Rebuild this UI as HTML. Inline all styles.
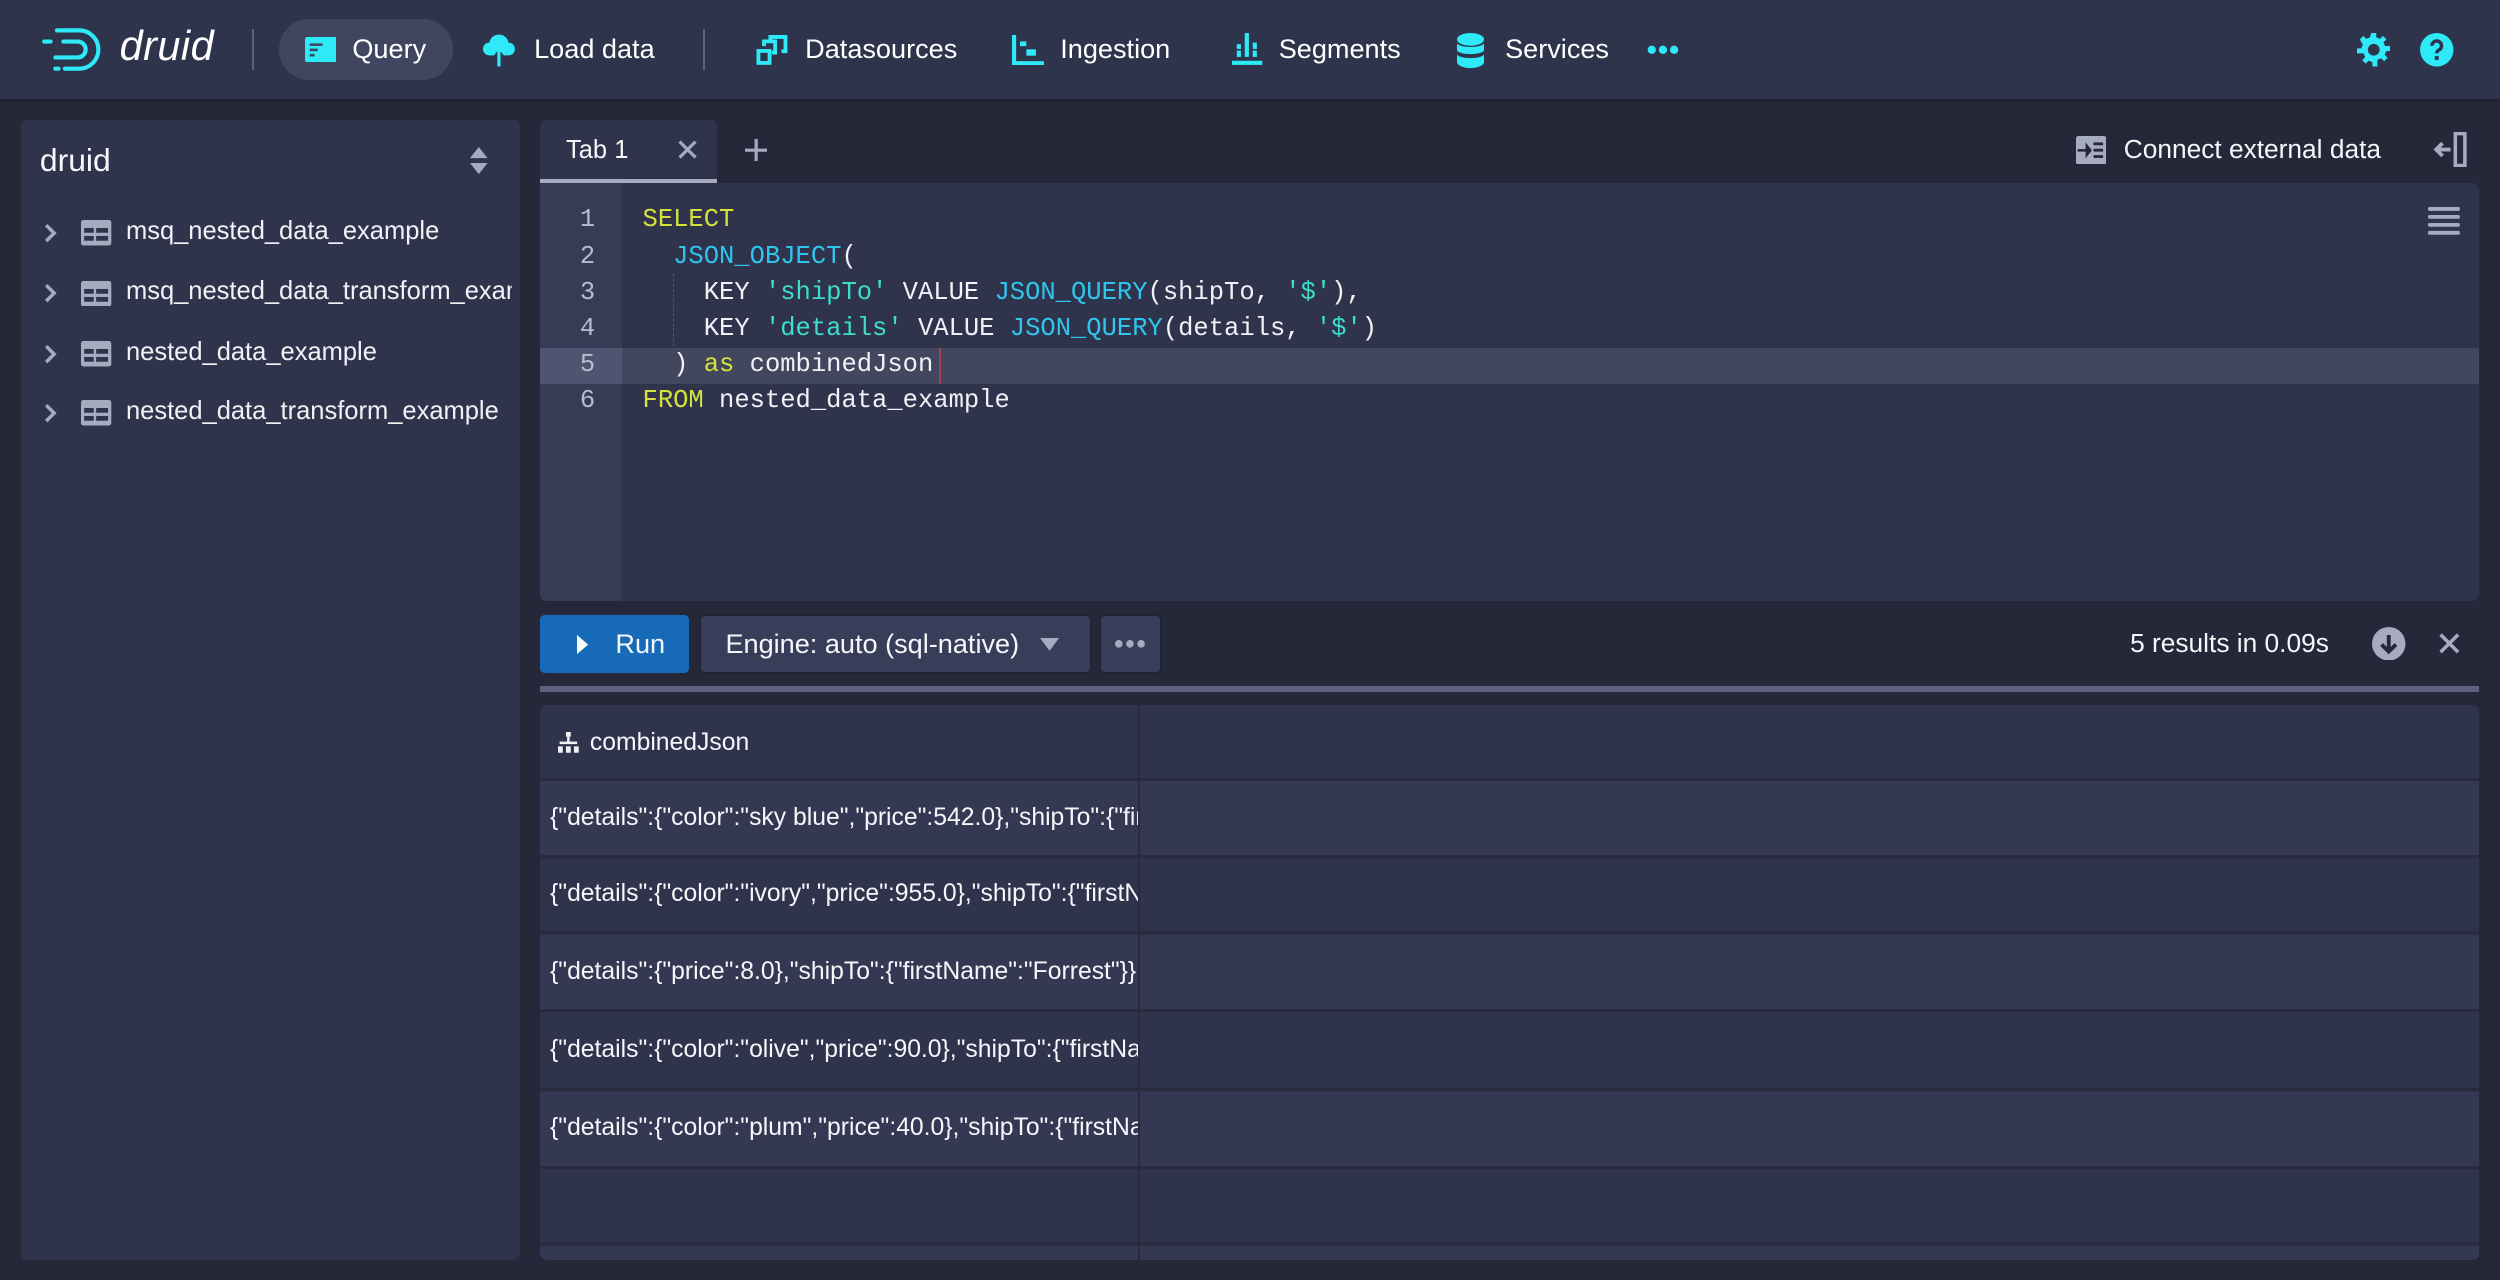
<!DOCTYPE html>
<html><head><meta charset="utf-8"><style>
html{zoom:1.59439;}
*{box-sizing:border-box;margin:0;padding:0}
body{width:1568px;height:803px;background:#242839;font-family:"Liberation Sans",sans-serif;color:#f5f7fa;position:relative;overflow:hidden}
.a{position:absolute}
.nav{left:0;top:0;width:1568px;height:62px;background:#2f344d;box-shadow:0 1px 3px rgba(0,0,0,.4)}
.nt{font-size:17px;color:#fff;top:21px;white-space:nowrap}
.cy{fill:#2ee9f7}
.panel{background:#2f334c;border-radius:4px}
.mono{font-family:"Liberation Mono",monospace;font-size:16px}
.k{color:#d5e23c}.f{color:#2fc6ee}.s{color:#3ddccb}
.ln{position:absolute;left:0;width:51px;text-align:center;color:#b8bcd0;padding-left:8px}
.row{position:absolute;left:339px;width:1216px;height:48px;border-bottom:2px solid #272b3d}
.cell{position:absolute;left:6px;top:14px;font-size:15.5px;white-space:nowrap;overflow:hidden;width:369px;color:#f5f7fa}
.tree{position:absolute;left:0;font-size:16px;color:#f0f2f6;white-space:nowrap}
</style></head><body>
<div class="a nav"></div>
<!-- logo -->
<svg class="a" style="left:26px;top:15px" width="46" height="32" viewBox="0 0 46 32"><g fill="none" stroke="#2ee9f7" stroke-width="2.6" stroke-linecap="round"><path d="M10 4H24a12 12 0 0 1 0 24H15"/><path d="M14 11H23a5 5 0 0 1 0 10H9"/><path d="M2 11H6"/><path d="M9 28H11"/></g></svg>
<div class="a" style="left:75px;top:14px;font-size:26px;font-style:italic;color:#fff;letter-spacing:.3px">druid</div>
<div class="a" style="left:158px;top:18px;width:1px;height:26px;background:#5c6079"></div>
<div class="a" style="left:175px;top:12px;width:109px;height:38px;border-radius:19px;background:#404560"></div>
<svg class="a" style="left:191px;top:23px" width="20" height="16"><rect width="20" height="16" rx="1.5" class="cy"/><g fill="#404560"><rect x="3" y="4" width="8" height="1.6"/><rect x="3" y="7.3" width="5" height="1.6"/><rect x="3" y="10.6" width="3" height="1.6"/></g></svg>
<div class="a nt" style="left:221px">Query</div>
<svg class="a" style="left:303px;top:21px" width="20" height="22" viewBox="0 0 20 22"><path class="cy" d="M10 1a6 6 0 0 1 6 5a4 4 0 0 1 0 8h-3l-3-4-3 4H4a4 4 0 0 1 0-8a6 6 0 0 1 6-5z"/><path d="M10 9v12M6 13l4-4 4 4" stroke="#2ee9f7" stroke-width="2" fill="none"/></svg>
<div class="a nt" style="left:335px">Load data</div>
<div class="a" style="left:441px;top:18px;width:1px;height:26px;background:#5c6079"></div>
<svg class="a" style="left:474px;top:22px" width="20" height="19"><g fill="none" stroke="#2ee9f7" stroke-width="2.4"><rect x="1.5" y="10" width="7" height="7.5"/><path d="M5 7V4h7v7h-2"/><path d="M9 3V1.2h9.5v9H16"/></g></svg>
<div class="a nt" style="left:505px">Datasources</div>
<svg class="a" style="left:635px;top:22px" width="20" height="19"><g class="cy"><rect x="0" y="0" width="2.6" height="19"/><rect x="0" y="16.4" width="20" height="2.6"/><rect x="5" y="4" width="4" height="3"/><rect x="9" y="9" width="6" height="4"/></g></svg>
<div class="a nt" style="left:665px">Ingestion</div>
<svg class="a" style="left:773px;top:21px" width="19" height="20"><g class="cy"><rect x="0" y="17.4" width="19" height="2.6"/><rect x="8" y="0" width="2.6" height="15"/><rect x="3" y="7" width="2.6" height="3"/><rect x="3" y="11" width="2.6" height="4"/><rect x="13" y="6" width="2.6" height="4"/><rect x="13" y="11" width="2.6" height="4"/></g></svg>
<div class="a nt" style="left:802px">Segments</div>
<svg class="a" style="left:914px;top:21px" width="17" height="22"><g class="cy"><ellipse cx="8.5" cy="4" rx="8.5" ry="4"/><path d="M0 6.5c2 3 15 3 17 0V11c-2 3-15 3-17 0z"/><path d="M0 13.5c2 3 15 3 17 0V18c0 2.2-3.8 4-8.5 4S0 20.2 0 18z"/></g></svg>
<div class="a nt" style="left:944px">Services</div>
<svg class="a" style="left:1033px;top:28px" width="20" height="6"><g class="cy"><circle cx="3" cy="3" r="2.6"/><circle cx="10" cy="3" r="2.6"/><circle cx="17" cy="3" r="2.6"/></g></svg>
<svg class="a" style="left:1478px;top:21px" width="21" height="21" viewBox="0 0 20 20"><path class="cy" d="M8.5 0h3v2.6a7.5 7.5 0 0 1 2.2.9l1.8-1.8 2.1 2.1-1.8 1.8a7.5 7.5 0 0 1 .9 2.2H20v3h-2.6a7.5 7.5 0 0 1-.9 2.2l1.8 1.8-2.1 2.1-1.8-1.8a7.5 7.5 0 0 1-2.2.9V20h-3v-2.6a7.5 7.5 0 0 1-2.2-.9l-1.8 1.8-2.1-2.1 1.8-1.8a7.5 7.5 0 0 1-.9-2.2H0v-3h2.6a7.5 7.5 0 0 1 .9-2.2L1.7 3.8l2.1-2.1 1.8 1.8a7.5 7.5 0 0 1 2.2-.9zM10 6.5a3.5 3.5 0 1 0 0 7a3.5 3.5 0 1 0 0-7z"/></svg>
<svg class="a" style="left:1518px;top:21px" width="21" height="21"><circle cx="10.5" cy="10.5" r="10.5" class="cy"/><path d="M7.5 8a3 3 0 1 1 4.5 2.6c-1 .6-1.5 1-1.5 2.2" stroke="#2f344d" stroke-width="2.2" fill="none"/><rect x="9.3" y="14.5" width="2.4" height="2.4" fill="#2f344d"/></svg>

<!-- left panel -->
<div class="a panel" style="left:13px;top:75px;width:313px;height:715px"></div>
<div class="a" style="left:25px;top:89px;font-size:20px;color:#f5f7fa">druid</div>
<svg class="a" style="left:295px;top:92px" width="11" height="17"><g fill="#a7abbf"><path d="M5.5 0L11 7H0z"/><path d="M0 10h11l-5.5 7z"/></g></svg>
<div class="a" style="left:25px;top:135px;width:296px;height:140px;overflow:hidden">
 <div class="tree" style="top:0">
  <svg class="a" style="left:2px;top:4px" width="10" height="14"><path d="M2 2l5 5-5 5" stroke="#a7abbf" stroke-width="2.2" fill="none"/></svg>
  <svg class="a" style="left:26px;top:3px" width="19" height="16"><rect width="19" height="16" rx="1.5" fill="#a7abbf"/><g fill="#2f334c"><rect x="2" y="5" width="6" height="3"/><rect x="9.5" y="5" width="7.5" height="3"/><rect x="2" y="10" width="6" height="3"/><rect x="9.5" y="10" width="7.5" height="3"/></g></svg>
  <span class="a" style="left:54px;top:1px">msq_nested_data_example</span></div>
 <div class="tree" style="top:38px">
  <svg class="a" style="left:2px;top:4px" width="10" height="14"><path d="M2 2l5 5-5 5" stroke="#a7abbf" stroke-width="2.2" fill="none"/></svg>
  <svg class="a" style="left:26px;top:3px" width="19" height="16"><rect width="19" height="16" rx="1.5" fill="#a7abbf"/><g fill="#2f334c"><rect x="2" y="5" width="6" height="3"/><rect x="9.5" y="5" width="7.5" height="3"/><rect x="2" y="10" width="6" height="3"/><rect x="9.5" y="10" width="7.5" height="3"/></g></svg>
  <span class="a" style="left:54px;top:1px">msq_nested_data_transform_example</span></div>
 <div class="tree" style="top:76px">
  <svg class="a" style="left:2px;top:4px" width="10" height="14"><path d="M2 2l5 5-5 5" stroke="#a7abbf" stroke-width="2.2" fill="none"/></svg>
  <svg class="a" style="left:26px;top:3px" width="19" height="16"><rect width="19" height="16" rx="1.5" fill="#a7abbf"/><g fill="#2f334c"><rect x="2" y="5" width="6" height="3"/><rect x="9.5" y="5" width="7.5" height="3"/><rect x="2" y="10" width="6" height="3"/><rect x="9.5" y="10" width="7.5" height="3"/></g></svg>
  <span class="a" style="left:54px;top:1px">nested_data_example</span></div>
 <div class="tree" style="top:113px">
  <svg class="a" style="left:2px;top:4px" width="10" height="14"><path d="M2 2l5 5-5 5" stroke="#a7abbf" stroke-width="2.2" fill="none"/></svg>
  <svg class="a" style="left:26px;top:3px" width="19" height="16"><rect width="19" height="16" rx="1.5" fill="#a7abbf"/><g fill="#2f334c"><rect x="2" y="5" width="6" height="3"/><rect x="9.5" y="5" width="7.5" height="3"/><rect x="2" y="10" width="6" height="3"/><rect x="9.5" y="10" width="7.5" height="3"/></g></svg>
  <span class="a" style="left:54px;top:1px">nested_data_transform_example</span></div>
</div>

<!-- tabs -->
<div class="a" style="left:339px;top:75px;width:111px;height:40px;background:#2f334c;border-radius:4px 4px 0 0;border-bottom:3px solid #a7abbf"></div>
<div class="a" style="left:355px;top:85px;font-size:16px">Tab 1</div>
<svg class="a" style="left:425px;top:88px" width="12" height="12"><path d="M1 1l10 10M11 1L1 11" stroke="#a7abbf" stroke-width="2"/></svg>
<svg class="a" style="left:467px;top:87px" width="14" height="14"><path d="M7 0v14M0 7h14" stroke="#a7abbf" stroke-width="2"/></svg>
<svg class="a" style="left:1302px;top:85px" width="19" height="18"><rect width="19" height="18" rx="1.5" fill="#a7abbf"/><g fill="#242839"><path d="M6 4l4 5-4 5z"/><rect x="1" y="8.2" width="6" height="1.6"/><rect x="11" y="4" width="6" height="1.8"/><rect x="11" y="8" width="6" height="1.8"/><rect x="11" y="12" width="6" height="1.8"/></g></svg>
<div class="a" style="left:1332px;top:84px;font-size:16.5px">Connect external data</div>
<svg class="a" style="left:1526px;top:83px" width="22" height="22"><path d="M14 1h6v20h-6z" fill="none" stroke="#a7abbf" stroke-width="2.2"/><path d="M11 11H3M6 7l-4 4 4 4" fill="none" stroke="#a7abbf" stroke-width="2.4"/></svg>

<!-- editor -->
<div class="a" style="left:339px;top:115px;width:1216px;height:262px;background:#2f334c;border-radius:0 4px 4px 4px;overflow:hidden">
 <div class="a" style="left:0;top:0;width:51px;height:262px;background:#373b55"></div>
 <div class="a" style="left:0;top:103px;width:1216px;height:23px;background:#42465e"></div>
 <div class="a" style="left:0;top:103px;width:51px;height:23px;background:#4f5470"></div>
 <div class="a mono" style="left:0;top:12px;width:1216px;line-height:22.7px">
  <div class="ln" style="top:0">1</div><div class="ln" style="top:22.7px">2</div><div class="ln" style="top:45.4px">3</div><div class="ln" style="top:68.1px">4</div><div class="ln" style="top:90.8px">5</div><div class="ln" style="top:113.5px">6</div>
  <pre class="a mono" style="left:64px;top:0;line-height:22.7px;color:#f0f2f6"><span class="k">SELECT</span>
  <span class="f">JSON_OBJECT</span>(
    KEY <span class="s">'shipTo'</span> VALUE <span class="f">JSON_QUERY</span>(shipTo, <span class="s">'$'</span>),
    KEY <span class="s">'details'</span> VALUE <span class="f">JSON_QUERY</span>(details, <span class="s">'$'</span>)
  ) <span class="k">as</span> combinedJson
<span class="k">FROM</span> nested_data_example</pre>
 </div>
 <div class="a" style="left:250px;top:103px;width:1px;height:23px;background:#a04050"></div>
 <div class="a" style="left:83px;top:57px;width:0;height:45px;border-left:1px dashed #4f5470"></div>
 <svg class="a" style="left:1184px;top:15px" width="20" height="18"><g fill="#a7abbf"><rect y="0" width="20" height="2.4" rx="1"/><rect y="5" width="20" height="2.4" rx="1"/><rect y="10" width="20" height="2.4" rx="1"/><rect y="15" width="20" height="2.4" rx="1"/></g></svg>
</div>

<!-- toolbar -->
<div class="a" style="left:339px;top:386px;width:93px;height:36px;background:#176ab7;border-radius:3px"></div>
<svg class="a" style="left:362px;top:398px" width="8" height="12"><path d="M0 0l7 6-7 6z" fill="#fff"/></svg>
<div class="a" style="left:386px;top:394px;font-size:17px">Run</div>
<div class="a" style="left:439px;top:386px;width:245px;height:36px;background:#383d59;border:1px solid #1d2131;border-radius:3px"></div>
<div class="a" style="left:455px;top:394px;font-size:17px">Engine: auto (sql-native)</div>
<svg class="a" style="left:652px;top:400px" width="12" height="8"><path d="M0 0h12L6 8z" fill="#a7abbf"/></svg>
<div class="a" style="left:690px;top:386px;width:38px;height:36px;background:#383d59;border:1px solid #1d2131;border-radius:3px"></div>
<svg class="a" style="left:699px;top:401px" width="20" height="6"><g fill="#a7abbf"><circle cx="3" cy="3" r="2.4"/><circle cx="10" cy="3" r="2.4"/><circle cx="17" cy="3" r="2.4"/></g></svg>
<div class="a" style="left:1336px;top:394px;font-size:16.5px">5 results in 0.09s</div>
<svg class="a" style="left:1488px;top:393px" width="21" height="21"><circle cx="10.5" cy="10.5" r="10.5" fill="#a7abbf"/><path d="M10.5 5v10M6 11l4.5 4.5L15 11" stroke="#242839" stroke-width="2.4" fill="none"/></svg>
<svg class="a" style="left:1530px;top:397px" width="13" height="13"><path d="M1 1l11 11M12 1L1 12" stroke="#a7abbf" stroke-width="2.2"/></svg>
<div class="a" style="left:339px;top:430px;width:1216px;height:4px;background:#5e6280"></div>

<!-- table -->
<div class="a" style="left:339px;top:442px;width:1216px;height:348px;background:#2f334c;border-radius:4px;overflow:hidden"></div>
<div class="row" style="top:442px;background:#2f334c;border-radius:4px 4px 0 0"><svg class="a" style="left:11px;top:17px" width="13" height="14"><g fill="#f0f2f6"><rect x="5" y="0" width="3" height="3"/><rect x="5.7" y="3" width="1.6" height="4"/><rect x="1" y="6" width="11" height="1.6"/><rect x="0" y="9" width="3" height="4"/><rect x="5" y="9" width="3" height="4"/><rect x="10" y="9" width="3" height="4"/></g></svg><div class="cell" style="left:31px;top:15px">combinedJson</div></div>
<div class="row" style="top:490px;background:#343852"><div class="cell">{"details":{"color":"sky blue","price":542.0},"shipTo":{"firstName":"Anna"}}</div></div>
<div class="row" style="top:538px;background:#2f334c"><div class="cell">{"details":{"color":"ivory","price":955.0},"shipTo":{"firstName":"Bob"}}</div></div>
<div class="row" style="top:587px;background:#343852"><div class="cell">{"details":{"price":8.0},"shipTo":{"firstName":"Forrest"}}</div></div>
<div class="row" style="top:636px;background:#2f334c"><div class="cell">{"details":{"color":"olive","price":90.0},"shipTo":{"firstName":"X"}}</div></div>
<div class="row" style="top:685px;background:#343852"><div class="cell">{"details":{"color":"plum","price":40.0},"shipTo":{"firstName":"Y"}}</div></div>
<div class="row" style="top:733px;background:#2f334c"></div>
<div class="row" style="top:782px;height:8px;background:#343852;border:0;border-radius:0 0 4px 4px"></div>
<div class="a" style="left:714px;top:442px;width:1px;height:348px;background:#272b3d"></div>
</body></html>
